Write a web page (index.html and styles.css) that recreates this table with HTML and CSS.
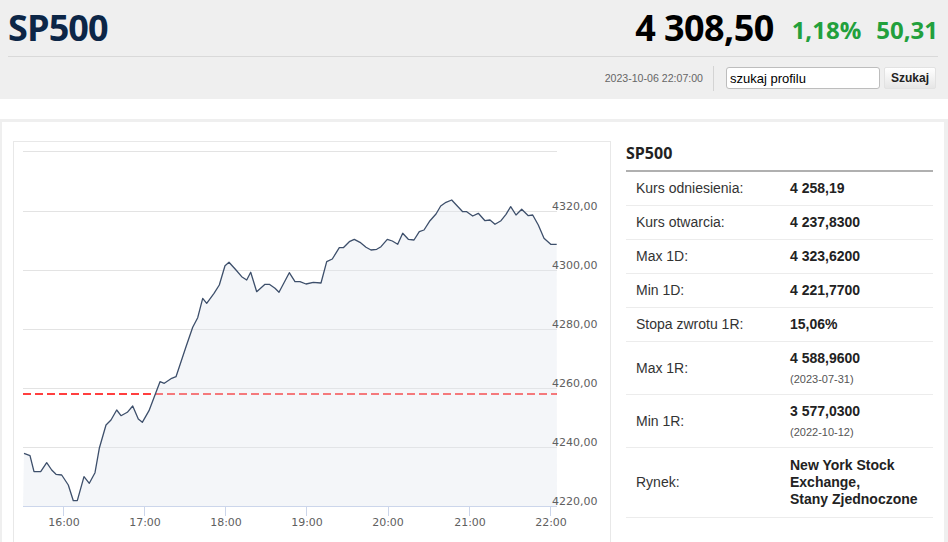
FILE: index.html
```html
<!DOCTYPE html>
<html lang="pl">
<head>
<meta charset="utf-8">
<title>SP500</title>
<link rel="stylesheet" href="styles.css">
</head>
<body>
<header class="header">
  <div class="top-row">
    <h1 class="title">SP500</h1>
    <div class="quote">
      <span class="price">4 308,50</span><span class="change">1,18%</span><span class="change">50,31</span>
    </div>
  </div>
  <div class="sub-row">
    <span class="stamp">2023-10-06 22:07:00</span>
    <span class="vsep"></span>
    <form class="search">
      <input class="search-input" type="text" value="szukaj profilu">
      <button class="search-btn" type="button">Szukaj</button>
    </form>
  </div>
</header>

<main class="main">
  <section class="chart-box">
    <svg class="chart" width="596" height="420" viewBox="14 142 596 420" xmlns="http://www.w3.org/2000/svg">
      <g class="grid" stroke="#e3e3e3" stroke-width="1">
        <line x1="23" y1="151.5" x2="557" y2="151.5"/>
        <line x1="23" y1="211.5" x2="557" y2="211.5"/>
        <line x1="23" y1="270.5" x2="557" y2="270.5"/>
        <line x1="23" y1="329.5" x2="557" y2="329.5"/>
        <line x1="23" y1="388.5" x2="557" y2="388.5"/>
        <line x1="23" y1="447.5" x2="557" y2="447.5"/>
      </g>
      <line x1="23" y1="394" x2="557" y2="394" stroke="#ff0000" stroke-width="1.5" stroke-dasharray="8 4"/>
      <polygon fill="#e0e5ed" fill-opacity="0.35" points="23,506.5 24,453.3 30,455.7 34,471.7 40.7,471.7 46.7,462.7 51.7,470 56,474.3 61.7,475 68.3,485 73.3,500.7 77.3,500.7 84,476.7 89.3,483.3 95,472.7 99.3,448.3 106,425 111,420 116.7,410 121,415.7 127.3,412.3 132.7,406 138.3,419 142.3,422.3 149,410.7 160,381.7 164.3,383.3 171.7,378.3 176,376.7 186,346.7 192.7,327.3 197.7,317.7 202.7,298.3 206.7,303.3 214,293.3 219.3,285 225,265.7 229,262.3 236,270 241.7,276.7 246.7,280 250.7,272.3 256.7,291.7 265,284.3 269.3,284.3 275,288.3 279,292.3 289.3,272.7 295,281.7 300,281.7 306,284 313.3,282.3 321,283 326.7,261.7 332.3,259 339.3,247.7 343.3,247.7 349.3,241.7 354.3,239.3 360,242.3 366,247.3 371,250 376.7,249.3 381,246.7 387.3,239.3 392.3,241 397.7,244.3 402.7,233.3 408.3,239.3 414,240 419.3,231.7 424,230 430,220.7 436,214 440.7,206 446,202.3 451.7,200 457.3,206 462.7,211.7 466.7,211.7 472.7,216 478.3,213.3 485,220.7 490,220 495,224.3 501,220.7 506,214.3 510.7,206.7 516,215 521.7,209.3 528.3,215.7 532.7,215 538.3,225 544,238.3 550.7,244.3 556.7,244.3 557,506.5"/>
      <polyline fill="none" stroke="#3d4f6b" stroke-width="1.3" stroke-linejoin="round" points="24,453.3 30,455.7 34,471.7 40.7,471.7 46.7,462.7 51.7,470 56,474.3 61.7,475 68.3,485 73.3,500.7 77.3,500.7 84,476.7 89.3,483.3 95,472.7 99.3,448.3 106,425 111,420 116.7,410 121,415.7 127.3,412.3 132.7,406 138.3,419 142.3,422.3 149,410.7 160,381.7 164.3,383.3 171.7,378.3 176,376.7 186,346.7 192.7,327.3 197.7,317.7 202.7,298.3 206.7,303.3 214,293.3 219.3,285 225,265.7 229,262.3 236,270 241.7,276.7 246.7,280 250.7,272.3 256.7,291.7 265,284.3 269.3,284.3 275,288.3 279,292.3 289.3,272.7 295,281.7 300,281.7 306,284 313.3,282.3 321,283 326.7,261.7 332.3,259 339.3,247.7 343.3,247.7 349.3,241.7 354.3,239.3 360,242.3 366,247.3 371,250 376.7,249.3 381,246.7 387.3,239.3 392.3,241 397.7,244.3 402.7,233.3 408.3,239.3 414,240 419.3,231.7 424,230 430,220.7 436,214 440.7,206 446,202.3 451.7,200 457.3,206 462.7,211.7 466.7,211.7 472.7,216 478.3,213.3 485,220.7 490,220 495,224.3 501,220.7 506,214.3 510.7,206.7 516,215 521.7,209.3 528.3,215.7 532.7,215 538.3,225 544,238.3 550.7,244.3 556.7,244.3"/>
      <g stroke="#ccd6eb" stroke-width="1">
        <line x1="23" y1="506.5" x2="557" y2="506.5"/>
        <line x1="63.5" y1="506" x2="63.5" y2="516"/>
        <line x1="144.5" y1="506" x2="144.5" y2="516"/>
        <line x1="225.5" y1="506" x2="225.5" y2="516"/>
        <line x1="306.5" y1="506" x2="306.5" y2="516"/>
        <line x1="388.5" y1="506" x2="388.5" y2="516"/>
        <line x1="469.5" y1="506" x2="469.5" y2="516"/>
        <line x1="550.5" y1="506" x2="550.5" y2="516"/>
      </g>
      <g class="ylab">
        <text x="552" y="209.5">4320,00</text>
        <text x="552" y="268.5">4300,00</text>
        <text x="552" y="327.5">4280,00</text>
        <text x="552" y="386.5">4260,00</text>
        <text x="552" y="445.5">4240,00</text>
        <text x="552" y="504.5">4220,00</text>
      </g>
      <g class="xlab" text-anchor="middle">
        <text x="64" y="525.5">16:00</text>
        <text x="145" y="525.5">17:00</text>
        <text x="226" y="525.5">18:00</text>
        <text x="307" y="525.5">19:00</text>
        <text x="388" y="525.5">20:00</text>
        <text x="470" y="525.5">21:00</text>
        <text x="551" y="525.5">22:00</text>
      </g>
    </svg>
  </section>

  <aside class="info">
    <h2 class="info-title">SP500</h2>
    <table class="info-table">
      <tr><td class="lbl">Kurs odniesienia:</td><td class="val">4 258,19</td></tr>
      <tr><td class="lbl">Kurs otwarcia:</td><td class="val">4 237,8300</td></tr>
      <tr><td class="lbl">Max 1D:</td><td class="val">4 323,6200</td></tr>
      <tr><td class="lbl">Min 1D:</td><td class="val">4 221,7700</td></tr>
      <tr><td class="lbl">Stopa zwrotu 1R:</td><td class="val">15,06%</td></tr>
      <tr><td class="lbl">Max 1R:</td><td class="val">4 588,9600<span class="date">(2023-07-31)</span></td></tr>
      <tr><td class="lbl">Min 1R:</td><td class="val">3 577,0300<span class="date">(2022-10-12)</span></td></tr>
      <tr class="tall"><td class="lbl">Rynek:</td><td class="val">New York Stock Exchange,<br> Stany Zjednoczone</td></tr>
    </table>
  </aside>
</main>
</body>
</html>
```

FILE: styles.css
```css
* { box-sizing: border-box; }

body {
  margin: 0;
  background: #fff;
  font-family: "Liberation Sans", Arial, sans-serif;
  color: #222;
  overflow: hidden;
}

.header {
  background: #efefef;
  height: 99px;
  padding: 0 10px 0 8px;
}

.top-row {
  display: flex;
  justify-content: space-between;
  align-items: flex-start;
  height: 57px;
  padding-top: 10px;
  border-bottom: 1px solid #d9d9d9;
}

.title {
  margin: 0;
  font-family: "Open Sans", "Noto Sans", sans-serif;
  font-weight: 700;
  font-size: 36px;
  line-height: 36px;
  color: #0c2647;
  letter-spacing: -0.9px;
}

.quote {
  font-family: "Open Sans", "Noto Sans", sans-serif;
  font-weight: 700;
  line-height: 36px;
  white-space: nowrap;
}

.price {
  font-size: 36px;
  color: #000;
  letter-spacing: -0.6px;
}

.change {
  font-size: 24px;
  color: #22a03c;
  margin-left: 15px;
  vertical-align: 2px;
}

.price + .change { margin-left: 18px; }

.sub-row {
  display: flex;
  justify-content: flex-end;
  align-items: center;
  height: 42px;
  padding-right: 2px;
}

.stamp {
  font-size: 10.6px;
  color: #666;
}

.vsep {
  width: 1px;
  height: 25px;
  background: #d4d4d4;
  margin: 0 12px 0 10px;
}

.search {
  display: flex;
  gap: 4px;
  margin: 0;
}

.search-input {
  width: 154px;
  height: 22px;
  border: 1px solid #bdbdbd;
  border-radius: 3px;
  padding: 0 3px;
  font-family: "Liberation Sans", Arial, sans-serif;
  font-size: 13px;
  color: #000;
  background: #fff;
}

.search-btn {
  width: 52px;
  height: 22px;
  border: 1px solid #e2e2e2;
  border-radius: 2px;
  background: linear-gradient(#ffffff, #e6e6e6);
  font-family: "Liberation Sans", Arial, sans-serif;
  font-weight: 700;
  font-size: 12px;
  color: #222;
  padding: 0;
}

.main {
  margin-top: 20px;
  display: flex;
  gap: 15px;
  padding: 19px 11px 0 11px;
  border: 3px solid #efefef;
  border-left-width: 2px;
  border-right-width: 4px;
  border-bottom: 0;
}

.chart-box {
  width: 598px;
  height: 430px;
  flex: none;
  border: 1px solid #e8e8e8;
}

.chart { display: block; }

.ylab text, .xlab text {
  font-family: "DejaVu Sans", Verdana, sans-serif;
  font-size: 11px;
  fill: #606060;
}

.info {
  width: 307px;
  flex: none;
}

.info-title {
  margin: 0;
  padding: 1px 0 6px;
  font-family: "Open Sans", "Noto Sans", sans-serif;
  font-weight: 700;
  font-size: 16px;
  line-height: 22px;
  color: #222;
  border-bottom: 2px solid #b0b0b0;
}

.info-table {
  width: 100%;
  border-collapse: collapse;
}

.info-table tr { border-bottom: 1px solid #ececec; }

.info-table td {
  padding: 8px 10px;
  font-size: 14px;
  line-height: 17px;
  vertical-align: middle;
}

.info-table .lbl {
  width: 164px;
  color: #333;
}

.info-table .val {
  padding-left: 0;
  font-weight: 700;
  color: #222;
}

.info-table .tall td { padding-top: 9px; padding-bottom: 9px; }

.date {
  display: block;
  margin-top: 5px;
  font-size: 11px;
  line-height: 14px;
  font-weight: 400;
  color: #555;
}
```
